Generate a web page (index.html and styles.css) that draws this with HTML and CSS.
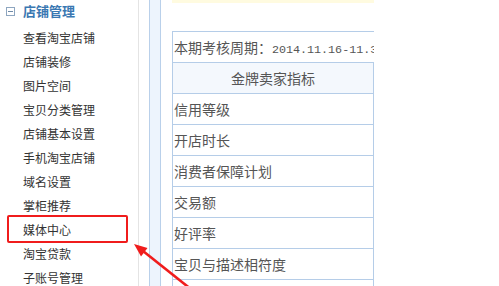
FILE: index.html
```html
<!DOCTYPE html>
<html lang="zh-CN">
<head>
    <meta charset="UTF-8">
    <title>店铺管理</title>
    <link rel="stylesheet" href="styles.css">
</head>
<body>
    <div class="sidebar">
        <div class="menu-title"><span class="toggle"></span>店铺管理</div>
        <ul class="menu">
            <li>查看淘宝店铺</li>
            <li>店铺装修</li>
            <li>图片空间</li>
            <li>宝贝分类管理</li>
            <li>店铺基本设置</li>
            <li>手机淘宝店铺</li>
            <li>域名设置</li>
            <li>掌柜推荐</li>
            <li>媒体中心</li>
            <li>淘宝贷款</li>
            <li>子账号管理</li>
        </ul>
    </div>
    <div class="splitter"></div>
    <div class="main">
        <div class="notice"></div>
        <div class="period">本期考核周期：<span class="num">2014.11.16-11.30</span></div>
        <table class="rules">
            <tr><th>金牌卖家指标</th></tr>
            <tr><td>信用等级</td></tr>
            <tr><td>开店时长</td></tr>
            <tr><td>消费者保障计划</td></tr>
            <tr><td>交易额</td></tr>
            <tr><td>好评率</td></tr>
            <tr><td>宝贝与描述相符度</td></tr>
            <tr><td>服务态度</td></tr>
        </table>
    </div>

    <!-- annotation -->
    <div class="mark-box"></div>
    <svg class="mark-arrow" width="499" height="286" viewBox="0 0 499 286">
        <line x1="143" y1="251" x2="192" y2="290" stroke="#f01c1c" stroke-width="2.6"/>
        <polygon points="134,244 141,256.5 147.5,248" fill="#f01c1c"/>
    </svg>
</body>
</html>
```

FILE: styles.css
```css
body {
    margin: 0;
    height: 286px;
    overflow: hidden;
    display: flex;
    background: #fff;
    font-family: "Noto Sans CJK SC", "Liberation Sans", sans-serif;
    position: relative;
}
.sidebar {
    width: 138px;
    border-right: 1px solid #e4e4e4;
    flex: none;
}
.menu-title {
    height: 22px;
    line-height: 22px;
    margin-bottom: 4px;
    font-size: 13px;
    font-weight: bold;
    color: #3a78b2;
    display: flex;
    align-items: center;
}
.toggle {
    width: 7px;
    height: 7px;
    border: 1px solid #8ea6c0;
    margin: 0 8px 0 6px;
    position: relative;
}
.toggle::after {
    content: "";
    position: absolute;
    left: 1px;
    right: 1px;
    top: 3px;
    height: 1px;
    background: #6f8aa8;
}
.menu {
    list-style: none;
    margin: 0;
    padding: 0;
}
.menu li {
    height: 24px;
    line-height: 24px;
    padding-left: 23px;
    font-size: 12px;
    color: #333;
}
.splitter {
    flex: none;
    width: 10px;
    margin-left: 10px;
    border-left: 1px solid #b9d0ea;
    border-right: 1px solid #b9d0ea;
    background: #edf4fd;
}
.main {
    flex: none;
    width: 202px;
    padding-left: 11px;
    overflow: hidden;
}
.notice {
    height: 3px;
    background: #fffbe0;
    margin-bottom: 28px;
}
.period {
    height: 30px;
    line-height: 30px;
    border-top: 1px solid #b5cde8;
    border-left: 1px solid #b5cde8;
    padding-left: 1px;
    white-space: nowrap;
    font-size: 14px;
    color: #555;
}
.num {
    font-family: "Liberation Mono", monospace;
    font-size: 11.7px;
}
.rules {
    width: 202px;
    border-collapse: collapse;
    font-size: 14px;
    color: #555;
}
.rules th, .rules td {
    border: 1px solid #b5cde8;
    height: 30px;
    line-height: 30px;
    padding: 0 1px;
    font-weight: normal;
    text-align: left;
}
.rules th {
    text-align: center;
    background: #f4f8fd;
}
.mark-box {
    position: absolute;
    left: 7px;
    top: 215px;
    width: 117px;
    height: 24px;
    border: 2px solid #f01c1c;
    border-radius: 2px;
}
.mark-arrow {
    position: absolute;
    left: 0;
    top: 0;
}
```
